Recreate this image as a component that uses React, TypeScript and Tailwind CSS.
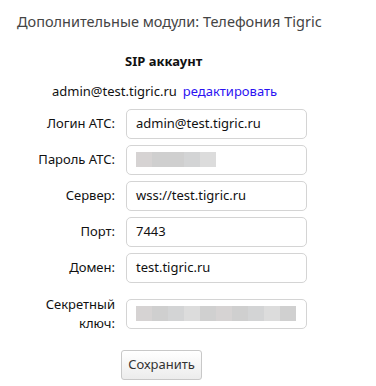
const rows: { label: string[]; value?: string; blur?: number[] }[] = [
  { label: ["Логин АТС:"], value: "admin@test.tigric.ru" },
  { label: ["Пароль АТС:"], blur: [16, 32, 16, 16] },
  { label: ["Сервер:"], value: "wss://test.tigric.ru" },
  { label: ["Порт:"], value: "7443" },
  { label: ["Домен:"], value: "test.tigric.ru" },
  { label: ["Секретный", "ключ:"], blur: [16, 16, 16, 16, 16, 16, 16, 16, 16, 16] },
];

const BLUR_SHADES = ["bg-[#d6d3d3]", "bg-[#cfcfcf]", "bg-[#d3d4d5]", "bg-[#dcdcdc]", "bg-[#d0d0d0]"];

function Blur({ widths }: { widths: number[] }) {
  return (
    <div className="flex h-[15px]">
      {widths.map((w, i) => (
        <div key={i} className={BLUR_SHADES[i % BLUR_SHADES.length]} style={{ width: w }} />
      ))}
    </div>
  );
}

export default function App() {
  return (
    <div className="w-[376px] h-[386px] bg-white text-[13px] text-[#111] font-['Noto_Sans',sans-serif]">
      <div className="pl-[17px] pt-[11px] text-[14.5px] text-[#444]">Дополнительные модули: Телефония Tigric</div>
      <div className="mt-[19px] pl-[125px] font-bold">SIP аккаунт</div>
      <div className="mt-[11px] pl-[52px] flex gap-[6px]">
        <span>admin@test.tigric.ru</span>
        <a href="#" className="text-[#2b12f2]">редактировать</a>
      </div>
      <div className="mt-[7px] flex flex-col gap-[6px]">
        {rows.map((r, i) => (
          <div key={i} className={`flex items-center ${r.label.length > 1 ? "mt-[6px]" : ""}`}>
            <div className="w-[116px] text-right pr-[1px] leading-[19px]">
              {r.label.map((l, j) => (
                <div key={j}>{l}</div>
              ))}
            </div>
            <div className="ml-[10px] w-[181px] h-[30px] border border-[#d4d4d4] rounded-[5px] flex items-center px-[9px]">
              {r.value ? <span>{r.value}</span> : <Blur widths={r.blur ?? []} />}
            </div>
          </div>
        ))}
      </div>
      <div className="mt-[17px] pl-[121px]">
        <button className="w-[81px] h-[30px] border border-[#c8c8c8] rounded-[3px] bg-gradient-to-b from-white to-[#ececec] text-[#333]">
          Сохранить
        </button>
      </div>
    </div>
  );
}
